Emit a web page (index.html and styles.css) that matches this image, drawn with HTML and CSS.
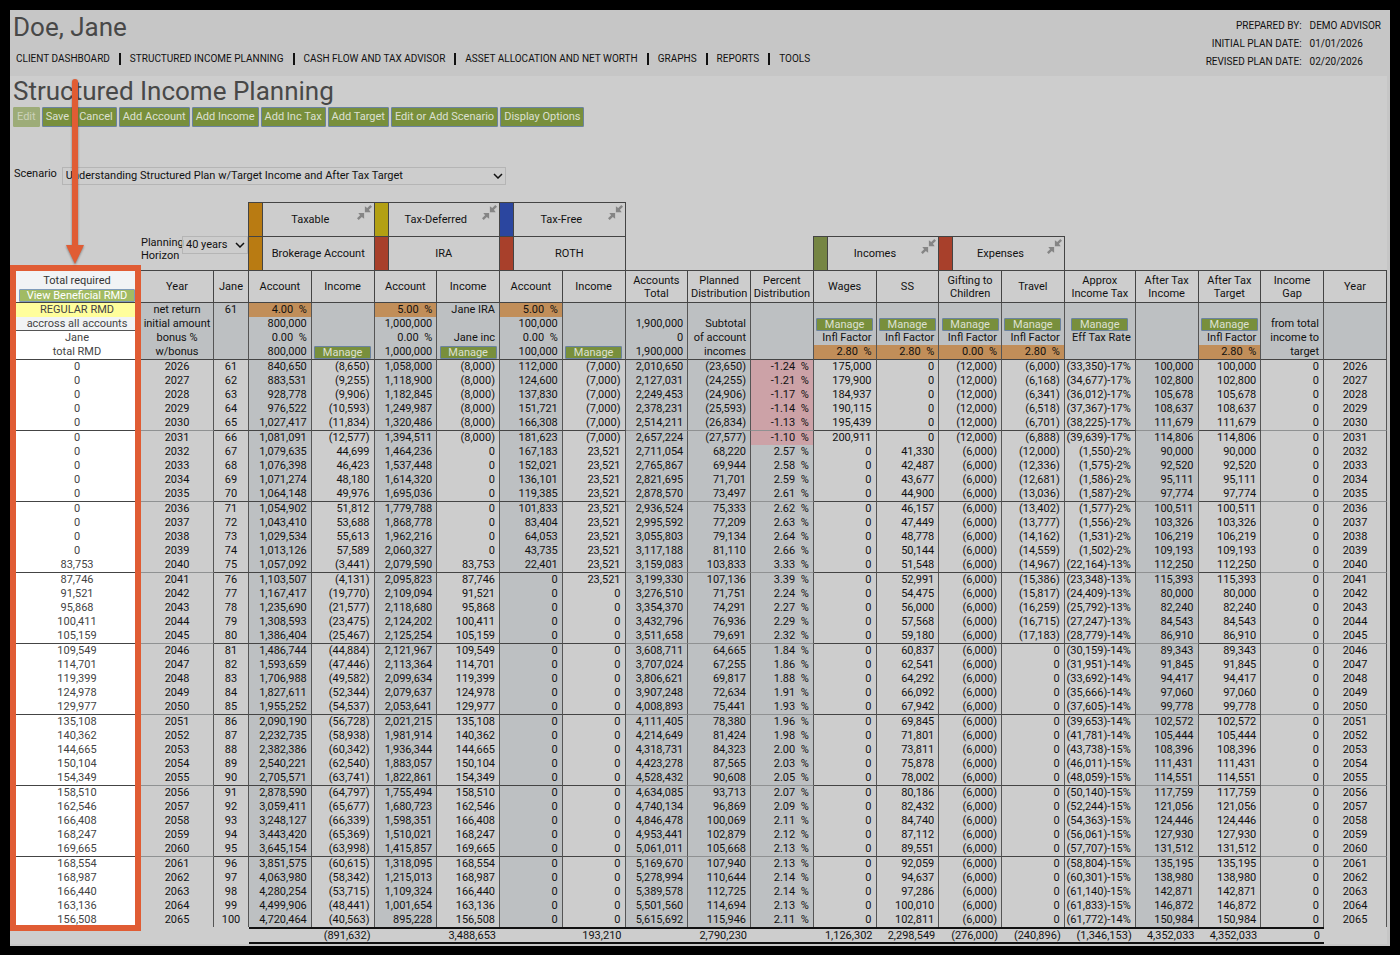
FILE: index.html
```html
<!DOCTYPE html>
<html lang="en">
<head>
<meta charset="utf-8">
<title>Structured Income Planning</title>
<link rel="stylesheet" href="styles.css">
</head>
<body>
<svg width="0" height="0" class="defs" aria-hidden="true">
  <symbol id="collapse" viewBox="0 0 16 16">
    <path d="M14.200 0 16 1.800 12.700 5.100 14.600 7.600H8.400V1.400L10.900 3.300z"/>
    <path d="M1.800 16 0 14.200 3.300 10.900 1.400 8.400H7.600V14.600L5.100 12.700z"/>
  </symbol>
  <symbol id="chevron" viewBox="0 0 10 6">
    <path d="M1 1l4 4 4-4" fill="none" stroke="#111" stroke-width="1.500"/>
  </symbol>
</svg>
<div class="card">
  <header class="top">
    <div class="top-left">
      <h1 class="title">Doe, Jane</h1>
      <nav class="nav">
        <a href="#">CLIENT DASHBOARD</a>
        <a href="#">STRUCTURED INCOME PLANNING</a>
        <a href="#">CASH FLOW AND TAX ADVISOR</a>
        <a href="#">ASSET ALLOCATION AND NET WORTH</a>
        <a href="#">GRAPHS</a>
        <a href="#">REPORTS</a>
        <a href="#">TOOLS</a>
      </nav>
    </div>
    <dl class="meta">
      <dt>PREPARED BY:</dt><dd>DEMO ADVISOR</dd>
      <dt>INITIAL PLAN DATE:</dt><dd>01/01/2026</dd>
      <dt>REVISED PLAN DATE:</dt><dd>02/20/2026</dd>
    </dl>
  </header>
  <main class="main">
    <h2 class="title">Structured Income Planning</h2>
    <div class="toolbar">
      <button class="btn" type="button" disabled>Edit</button>
      <button class="btn" type="button">Save</button>
      <button class="btn" type="button">Cancel</button>
      <button class="btn" type="button">Add Account</button>
      <button class="btn" type="button">Add Income</button>
      <button class="btn" type="button">Add Inc Tax</button>
      <button class="btn" type="button">Add Target</button>
      <button class="btn" type="button">Edit or Add Scenario</button>
      <button class="btn" type="button">Display Options</button>
    </div>
    <div class="scenario">
      <label for="scenario">Scenario</label>
      <span class="select scenario-select">
        <select id="scenario"><option>Understanding Structured Plan w/Target Income and After Tax Target</option></select>
        <svg class="chevron"><use href="#chevron"/></svg>
      </span>
    </div>
    <div class="plan">
      <table class="grid">
        <colgroup>
          <col class="c-rmd"><col class="c-year"><col class="c-age">
          <col span="13">
          <col class="c-tax">
          <col span="4">
        </colgroup>
        <thead>
          <tr class="r-cat">
            <td rowspan="2"></td>
            <td rowspan="2" colspan="2" class="horizon-cell">
              <div class="horizon">
                <label for="horizon">Planning Horizon</label>
                <span class="select horizon-select">
                  <select id="horizon"><option>40 years</option></select>
                  <svg class="chevron"><use href="#chevron"/></svg>
                </span>
              </div>
            </td>
            <th colspan="2" class="cat folding"><div class="cat-in"><i class="sw amber"></i><span>Taxable</span><svg class="collapse"><use href="#collapse"/></svg></div></th>
            <th colspan="2" class="cat folding"><div class="cat-in"><i class="sw yellow"></i><span>Tax-Deferred</span><svg class="collapse"><use href="#collapse"/></svg></div></th>
            <th colspan="2" class="cat folding"><div class="cat-in"><i class="sw blue"></i><span>Tax-Free</span><svg class="collapse"><use href="#collapse"/></svg></div></th>
            <td colspan="12"></td>
          </tr>
          <tr class="r-cat">
            <th colspan="2" class="cat"><div class="cat-in"><i class="sw amber"></i><span>Brokerage Account</span></div></th>
            <th colspan="2" class="cat"><div class="cat-in"><i class="sw red"></i><span>IRA</span></div></th>
            <th colspan="2" class="cat"><div class="cat-in"><i class="sw red"></i><span>ROTH</span></div></th>
            <td colspan="3" class="rule-right"></td>
            <th colspan="2" class="cat folding"><div class="cat-in"><i class="sw green"></i><span>Incomes</span><svg class="collapse"><use href="#collapse"/></svg></div></th>
            <th colspan="2" class="cat folding"><div class="cat-in"><i class="sw red"></i><span>Expenses</span><svg class="collapse"><use href="#collapse"/></svg></div></th>
            <td colspan="5"></td>
          </tr>
          <tr class="r-head">
            <th class="rmd-head"><div class="rmd-label">Total required</div><button class="btn small view" type="button">View Beneficial RMD</button></th>
            <th>Year</th><th>Jane</th>
            <th>Account</th><th>Income</th><th>Account</th><th>Income</th><th>Account</th><th>Income</th>
            <th>Accounts Total</th><th>Planned Distribution</th><th>Percent Distribution</th>
            <th>Wages</th><th>SS</th><th>Gifting to Children</th><th>Travel</th>
            <th>Approx Income&nbsp;Tax</th><th>After Tax Income</th><th>After Tax Target</th><th>Income<br>Gap</th><th>Year</th>
          </tr>
        </thead>
        <tbody class="setup">
          <tr>
            <td class="rmd regular">REGULAR RMD</td><td class="mid">net return</td><td class="mid">61</td>
            <td class="rate">4.00  %</td><td></td><td class="rate">5.00  %</td><td>Jane IRA</td><td class="rate">5.00  %</td><td></td>
            <td></td><td></td><td></td><td></td><td></td><td></td><td></td><td></td><td></td><td></td><td></td><td></td>
          </tr>
          <tr>
            <td class="rmd across">accross all accounts</td><td class="mid">initial amount</td><td></td>
            <td>800,000</td><td></td><td>1,000,000</td><td></td><td>100,000</td><td></td>
            <td>1,900,000</td><td>Subtotal</td><td></td>
            <td class="act"><button class="btn small" type="button">Manage</button></td>
            <td class="act"><button class="btn small" type="button">Manage</button></td>
            <td class="act"><button class="btn small" type="button">Manage</button></td>
            <td class="act"><button class="btn small" type="button">Manage</button></td>
            <td class="act"><button class="btn small" type="button">Manage</button></td>
            <td></td>
            <td class="act"><button class="btn small" type="button">Manage</button></td>
            <td>from total</td><td></td>
          </tr>
          <tr>
            <td class="rmd">Jane</td><td class="mid">bonus %</td><td></td>
            <td>0.00  %</td><td></td><td>0.00  %</td><td>Jane inc</td><td>0.00  %</td><td></td>
            <td>0</td><td>of account</td><td></td>
            <td>Infl Factor</td><td>Infl Factor</td><td>Infl Factor</td><td>Infl Factor</td><td>Eff Tax Rate</td><td></td><td>Infl Factor</td><td>income to</td><td></td>
          </tr>
          <tr>
            <td class="rmd">total RMD</td><td class="mid">w/bonus</td><td></td>
            <td>800,000</td><td class="act"><button class="btn small" type="button">Manage</button></td>
            <td>1,000,000</td><td class="act"><button class="btn small" type="button">Manage</button></td>
            <td>100,000</td><td class="act"><button class="btn small" type="button">Manage</button></td>
            <td>1,900,000</td><td>incomes</td><td></td>
            <td class="rate">2.80  %</td><td class="rate">2.80  %</td><td class="rate">0.00  %</td><td class="rate">2.80  %</td><td></td><td></td><td class="rate">2.80  %</td><td>target</td><td></td>
          </tr>
        </tbody>
        <tbody class="years" id="years"></tbody>
        <tfoot>
          <tr>
            <td colspan="3" class="none"></td>
            <td></td><td>(891,632)</td><td></td><td>3,488,653</td><td></td><td>193,210</td>
            <td></td><td>2,790,230</td><td></td>
            <td>1,126,302</td><td>2,298,549</td><td>(276,000)</td><td>(240,896)</td><td>(1,346,153)</td><td>4,352,033</td><td>4,352,033</td><td>0</td>
            <td class="none"></td>
          </tr>
        </tfoot>
      </table>
      <div class="highlight"></div>
      <svg class="arrow" viewBox="0 0 20 186" aria-hidden="true">
        <path d="M10 3V168" stroke="#e05c34" stroke-width="6" stroke-linecap="round"/>
        <path d="M1 166H19L10 185z" fill="#e05c34"/>
      </svg>
    </div>
  </main>
</div>
<script src="plan.js"></script>
</body>
</html>
```

FILE: styles.css
```css
* { box-sizing: border-box; }

body {
  margin: 0;
  padding: 10px;
  background: #000;
  color: #111;
  font: 11px/14px Roboto, "Liberation Sans", sans-serif;
}

.defs { position: absolute; }

.card { background: #c6c6c6; padding-bottom: 2px; }

.top {
  display: flex;
  justify-content: space-between;
  height: 66px;
  padding: 0 9px 0 3px;
}

.title {
  margin: 0;
  font-size: 26px;
  line-height: 30px;
  font-weight: 400;
  color: #484848;
}
.top .title { padding-top: 2px; }

.nav {
  display: flex;
  align-items: center;
  margin-top: 10px;
  padding-left: 3px;
  font-size: 10px;
  line-height: 14px;
}
.nav a { color: #111; text-decoration: none; display: flex; align-items: center; }
.nav a + a::before {
  content: "";
  width: 2px;
  height: 12px;
  margin: 0 9px;
  background: #111;
}

.meta {
  display: grid;
  grid-template-columns: auto auto;
  column-gap: 8px;
  margin: 7px 0 0;
  align-content: start;
  font-size: 10px;
  line-height: 18px;
}
.meta dt { text-align: right; }
.meta dd { margin: 0; }

.main { margin-right: 3px; padding-left: 3px; background: #cdcdcd; }

.toolbar { display: flex; gap: 2px; margin-top: 1px; }

.btn {
  height: 20px;
  padding: 0 3px;
  border: 1px solid #6b83a0;
  border-radius: 1px;
  background: #788f3c;
  color: #dde0d2;
  font: 11px/16px Roboto, "Liberation Sans", sans-serif;
  white-space: nowrap;
}
.btn:disabled { background: #9dac78; border-color: #9dac78; color: #ccd2ba; }
.btn.small { display: block; width: 57px; height: 13px; margin: 0 auto; padding: 0; line-height: 11px; }
.btn.view { width: 116px; background: #a1bb63; border-color: #7f9cbb; color: #fff; }

.scenario { display: flex; gap: 5px; align-items: flex-start; height: 18px; margin: 40px 0 17px; padding-left: 1px; }

.select { position: relative; display: block; }
.select select {
  display: block;
  width: 100%;
  height: 18px;
  padding: 0 3px;
  border: 1px solid #b5b5b5;
  border-radius: 0;
  background: transparent;
  color: #111;
  font: 11px/14px Roboto, "Liberation Sans", sans-serif;
  appearance: none;
}
.chevron { position: absolute; right: 3px; top: 6px; width: 10px; height: 6px; pointer-events: none; }
.scenario-select { width: 444px; }
.horizon-select { flex: 1; }

.plan { position: relative; }

.grid { width: 100%; table-layout: fixed; border-collapse: separate; border-spacing: 0; }
.grid th, .grid td { padding: 0; font-weight: 400; }
.c-rmd { width: 128px; }
.c-year { width: 73px; }
.c-age { width: 35px; }
.c-tax { width: 71px; }

.r-cat { height: 34px; }
.grid .horizon-cell { border-right: 1px solid #444; vertical-align: top; padding-top: 34px; }
.horizon { display: flex; line-height: 13px; text-align: left; }
.horizon label { width: 41px; }
.grid .cat { border: solid #444; border-width: 1px 1px 0 0; }
.grid .rule-right { border-right: 1px solid #444; }
.cat-in { position: relative; display: flex; height: 33px; align-items: center; }
.folding .cat-in { padding-right: 16px; }
.cat-in span { flex: 1; text-align: center; }
.cat-in .sw { width: 14px; height: 33px; border-right: 1px solid #444; }
.amber { background: #b97b12; }
.yellow { background: #b3a013; }
.blue { background: #2b469f; }
.red { background: #a8402b; }
.green { background: #758543; }
.collapse { position: absolute; right: 2px; top: 2px; width: 15px; height: 15px; fill: #858585; }

.r-head { height: 33px; }
.grid .r-head th { border: solid #444; border-width: 1px 1px 1px 0; line-height: 13px; }
.grid .r-head .rmd-head { border-right: 0; background: #f1f3f5; vertical-align: bottom; }
.rmd-head .rmd-label { line-height: 17px; color: #333; }

.setup tr, .years tr { height: 14px; }
.setup td, .years td {
  height: 14px;
  border-right: 1px solid #555;
  text-align: right;
  white-space: pre;
}
.grid .setup td, .grid .years td, .grid tfoot td { padding-right: 4px; }
.setup td { background: #bdc0c2; }
.grid .setup .act { padding: 0; }
.grid .setup .mid, .grid .years .mid { text-align: center; padding: 0; }
.setup .rate { background: #c18e59; }
.years .shade { background: #bdc0c2; }
.years .minus { background: #cca2a7; }
.grid .setup .rmd, .grid .years .rmd {
  padding: 0;
  border-right: 0;
  background: #fff;
  color: #444;
  text-align: center;
}
.grid .setup .regular { background: #fffe9c; }
.grid .setup .across { background: #f1f3f5; border-bottom: 1px solid #555; line-height: 13px; }
.years .start td { border-top: 1px solid #444; }
.years .start .soft { border-top-color: #8f9192; }
.years tr:first-child .soft { border-top-color: #444; }

.grid tfoot td {
  border: solid #111;
  border-width: 2px 0;
  height: 17px;
  line-height: 13px;
  text-align: right;
}
.grid tfoot .none { border: 0; }

.highlight {
  position: absolute;
  left: -3px;
  top: 63px;
  bottom: 13px;
  width: 131px;
  border: 6px solid #e05c34;
  pointer-events: none;
}
.arrow {
  position: absolute;
  left: 52px;
  top: -123px;
  width: 20px;
  height: 186px;
  filter: drop-shadow(0 1px 1px rgba(0, 0, 0, 0.4));
  pointer-events: none;
}
```

FILE: plan.js
```js
// One line per plan year: RMD, age, three account/income pairs, total,
// planned distribution, percent, wages, SS, gifting, travel, tax, after-tax income.
const lines = `0 61 840,650 (8,650) 1,058,000 (8,000) 112,000 (7,000) 2,010,650 (23,650) -1.24 175,000 0 (12,000) (6,000) (33,350)-17% 100,000
0 62 883,531 (9,255) 1,118,900 (8,000) 124,600 (7,000) 2,127,031 (24,255) -1.21 179,900 0 (12,000) (6,168) (34,677)-17% 102,800
0 63 928,778 (9,906) 1,182,845 (8,000) 137,830 (7,000) 2,249,453 (24,906) -1.17 184,937 0 (12,000) (6,341) (36,012)-17% 105,678
0 64 976,522 (10,593) 1,249,987 (8,000) 151,721 (7,000) 2,378,231 (25,593) -1.14 190,115 0 (12,000) (6,518) (37,367)-17% 108,637
0 65 1,027,417 (11,834) 1,320,486 (8,000) 166,308 (7,000) 2,514,211 (26,834) -1.13 195,439 0 (12,000) (6,701) (38,225)-17% 111,679
0 66 1,081,091 (12,577) 1,394,511 (8,000) 181,623 (7,000) 2,657,224 (27,577) -1.10 200,911 0 (12,000) (6,888) (39,639)-17% 114,806
0 67 1,079,635 44,699 1,464,236 0 167,183 23,521 2,711,054 68,220 2.57 0 41,330 (6,000) (12,000) (1,550)-2% 90,000
0 68 1,076,398 46,423 1,537,448 0 152,021 23,521 2,765,867 69,944 2.58 0 42,487 (6,000) (12,336) (1,575)-2% 92,520
0 69 1,071,274 48,180 1,614,320 0 136,101 23,521 2,821,695 71,701 2.59 0 43,677 (6,000) (12,681) (1,586)-2% 95,111
0 70 1,064,148 49,976 1,695,036 0 119,385 23,521 2,878,570 73,497 2.61 0 44,900 (6,000) (13,036) (1,587)-2% 97,774
0 71 1,054,902 51,812 1,779,788 0 101,833 23,521 2,936,524 75,333 2.62 0 46,157 (6,000) (13,402) (1,577)-2% 100,511
0 72 1,043,410 53,688 1,868,778 0 83,404 23,521 2,995,592 77,209 2.63 0 47,449 (6,000) (13,777) (1,556)-2% 103,326
0 73 1,029,534 55,613 1,962,216 0 64,053 23,521 3,055,803 79,134 2.64 0 48,778 (6,000) (14,162) (1,531)-2% 106,219
0 74 1,013,126 57,589 2,060,327 0 43,735 23,521 3,117,188 81,110 2.66 0 50,144 (6,000) (14,559) (1,502)-2% 109,193
83,753 75 1,057,092 (3,441) 2,079,590 83,753 22,401 23,521 3,159,083 103,833 3.33 0 51,548 (6,000) (14,967) (22,164)-13% 112,250
87,746 76 1,103,507 (4,131) 2,095,823 87,746 0 23,521 3,199,330 107,136 3.39 0 52,991 (6,000) (15,386) (23,348)-13% 115,393
91,521 77 1,167,417 (19,770) 2,109,094 91,521 0 0 3,276,510 71,751 2.24 0 54,475 (6,000) (15,817) (24,409)-13% 80,000
95,868 78 1,235,690 (21,577) 2,118,680 95,868 0 0 3,354,370 74,291 2.27 0 56,000 (6,000) (16,259) (25,792)-13% 82,240
100,411 79 1,308,593 (23,475) 2,124,202 100,411 0 0 3,432,796 76,936 2.29 0 57,568 (6,000) (16,715) (27,247)-13% 84,543
105,159 80 1,386,404 (25,467) 2,125,254 105,159 0 0 3,511,658 79,691 2.32 0 59,180 (6,000) (17,183) (28,779)-14% 86,910
109,549 81 1,486,744 (44,884) 2,121,967 109,549 0 0 3,608,711 64,665 1.84 0 60,837 (6,000) 0 (30,159)-14% 89,343
114,701 82 1,593,659 (47,446) 2,113,364 114,701 0 0 3,707,024 67,255 1.86 0 62,541 (6,000) 0 (31,951)-14% 91,845
119,399 83 1,706,988 (49,582) 2,099,634 119,399 0 0 3,806,621 69,817 1.88 0 64,292 (6,000) 0 (33,692)-14% 94,417
124,978 84 1,827,611 (52,344) 2,079,637 124,978 0 0 3,907,248 72,634 1.91 0 66,092 (6,000) 0 (35,666)-14% 97,060
129,977 85 1,955,252 (54,537) 2,053,641 129,977 0 0 4,008,893 75,441 1.93 0 67,942 (6,000) 0 (37,605)-14% 99,778
135,108 86 2,090,190 (56,728) 2,021,215 135,108 0 0 4,111,405 78,380 1.96 0 69,845 (6,000) 0 (39,653)-14% 102,572
140,362 87 2,232,735 (58,938) 1,981,914 140,362 0 0 4,214,649 81,424 1.98 0 71,801 (6,000) 0 (41,781)-14% 105,444
144,665 88 2,382,386 (60,342) 1,936,344 144,665 0 0 4,318,731 84,323 2.00 0 73,811 (6,000) 0 (43,738)-15% 108,396
150,104 89 2,540,221 (62,540) 1,883,057 150,104 0 0 4,423,278 87,565 2.03 0 75,878 (6,000) 0 (46,011)-15% 111,431
154,349 90 2,705,571 (63,741) 1,822,861 154,349 0 0 4,528,432 90,608 2.05 0 78,002 (6,000) 0 (48,059)-15% 114,551
158,510 91 2,878,590 (64,797) 1,755,494 158,510 0 0 4,634,085 93,713 2.07 0 80,186 (6,000) 0 (50,140)-15% 117,759
162,546 92 3,059,411 (65,677) 1,680,723 162,546 0 0 4,740,134 96,869 2.09 0 82,432 (6,000) 0 (52,244)-15% 121,056
166,408 93 3,248,127 (66,339) 1,598,351 166,408 0 0 4,846,478 100,069 2.11 0 84,740 (6,000) 0 (54,363)-15% 124,446
168,247 94 3,443,420 (65,369) 1,510,021 168,247 0 0 4,953,441 102,879 2.12 0 87,112 (6,000) 0 (56,061)-15% 127,930
169,665 95 3,645,154 (63,998) 1,415,857 169,665 0 0 5,061,011 105,668 2.13 0 89,551 (6,000) 0 (57,707)-15% 131,512
168,554 96 3,851,575 (60,615) 1,318,095 168,554 0 0 5,169,670 107,940 2.13 0 92,059 (6,000) 0 (58,804)-15% 135,195
168,987 97 4,063,980 (58,342) 1,215,013 168,987 0 0 5,278,994 110,644 2.14 0 94,637 (6,000) 0 (60,301)-15% 138,980
166,440 98 4,280,254 (53,715) 1,109,324 166,440 0 0 5,389,578 112,725 2.14 0 97,286 (6,000) 0 (61,140)-15% 142,871
163,136 99 4,499,906 (48,441) 1,001,654 163,136 0 0 5,501,560 114,694 2.13 0 100,010 (6,000) 0 (61,833)-15% 146,872
156,508 100 4,720,464 (40,563) 895,228 156,508 0 0 5,615,692 115,946 2.11 0 102,811 (6,000) 0 (61,772)-14% 150,984`.split("\n");

const classes = {
  0: "rmd", 1: "mid soft", 2: "mid", 3: "shade", 5: "shade", 7: "shade",
  9: "shade soft", 10: "shade soft", 11: "shade soft", 17: "shade soft",
  19: "soft", 20: "mid soft"
};

const body = document.getElementById("years");
lines.forEach((line, i) => {
  const f = line.split(" ");
  const year = String(2026 + i);
  const values = [f[0], year, ...f.slice(1), f[16], "0", year];
  const row = body.insertRow();
  if (i % 5 === 0) row.className = "start";
  values.forEach((value, c) => {
    const cell = row.insertCell();
    cell.className = classes[c] || "";
    if (c === 11) {
      if (value.startsWith("-")) cell.className = "minus soft";
      value += "  %";
    }
    cell.textContent = value;
  });
});
```
